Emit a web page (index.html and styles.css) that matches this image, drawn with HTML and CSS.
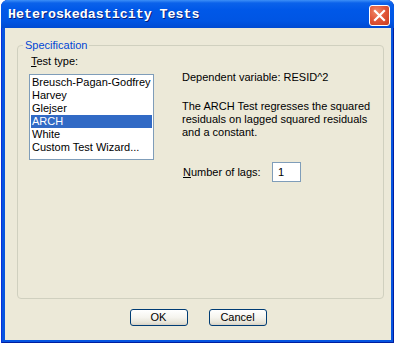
FILE: index.html
```html
<!DOCTYPE html>
<html lang="en">
<head>
    <meta charset="UTF-8">
    <title>Heteroskedasticity Tests</title>
    <link rel="stylesheet" href="styles.css">
</head>
<body>
    <div class="window">
        <div class="titlebar">
            <span class="title">Heteroskedasticity Tests</span>
            <div class="close-btn">
                <svg width="13" height="13" viewBox="0 0 13 13">
                    <path d="M2 2 L11 11 M11 2 L2 11" stroke="#fff" stroke-width="2.2" stroke-linecap="square"/>
                </svg>
            </div>
        </div>

        <div class="client">
            <fieldset class="group">
                <legend>Specification</legend>
                <div class="group-body">
                    <div class="left-col">
                        <div class="label"><u>T</u>est type:</div>
                        <div class="listbox">
                            <div class="item">Breusch-Pagan-Godfrey</div>
                            <div class="item">Harvey</div>
                            <div class="item">Glejser</div>
                            <div class="item selected">ARCH</div>
                            <div class="item">White</div>
                            <div class="item">Custom Test Wizard...</div>
                        </div>
                    </div>
                    <div class="right-col">
                        <div class="dep-var">Dependent variable: RESID^2</div>
                        <p class="desc">The ARCH Test regresses the squared residuals on lagged squared residuals and a constant.</p>
                        <div class="lags-row">
                            <span class="lags-label"><u>N</u>umber of lags:</span>
                            <div class="textbox">1</div>
                        </div>
                    </div>
                </div>
            </fieldset>

            <div class="buttons">
                <div class="btn">OK</div>
                <div class="btn">Cancel</div>
            </div>
        </div>
    </div>
</body>
</html>
```

FILE: styles.css
```css
body {
    margin: 0;
    background: #ffffff;
    font-family: "Liberation Sans", Arial, sans-serif;
    font-size: 11px;
    color: #000;
}

.window {
    margin-left: 1px;
    width: 393px;
    height: 343px;
    background: #0654e0;
    border-radius: 7px 7px 0 0;
    display: flex;
    flex-direction: column;
    box-shadow: inset 1px 0 0 #0831d9, inset -1px 0 0 #001ea0, inset 0 -1px 0 #001ea0;
}

.titlebar {
    height: 28px;
    display: flex;
    align-items: center;
    justify-content: space-between;
    padding: 0 4px 0 7px;
    border-radius: 7px 7px 0 0;
    background: linear-gradient(#3d8ff7 0, #0b62ea 3px, #0058e8 35%, #0055e3 75%, #004ad2 100%);
}

.title {
    font-family: "Liberation Mono", monospace;
    font-weight: bold;
    font-size: 13.3px;
    color: #fff;
    text-shadow: 1px 1px 0 #0a1f78;
    margin-top: 1px;
}

.close-btn {
    width: 19px;
    height: 19px;
    border: 1px solid #fff;
    border-radius: 3px;
    background: radial-gradient(circle at 35% 30%, #f08a6a 0, #e2583a 45%, #c93c1c 100%);
    display: flex;
    align-items: center;
    justify-content: center;
    margin-top: 2px;
}

.client {
    flex: 1;
    margin: 0 3px 3px 4px;
    background: #ece9d8;
    padding: 12px 0 0 12px;
}

.group {
    width: 367px;
    height: 259px;
    box-sizing: border-box;
    margin: 0;
    padding: 4px 0 0 11px;
    border: 1px solid #d0d0bf;
    border-radius: 4px;
}

.group legend {
    color: #0046d5;
    line-height: 11px;
    padding: 0 2px;
    margin-left: -6px;
}

.group-body {
    display: flex;
    gap: 28px;
}

.left-col {
    width: 125px;
}

.label {
    line-height: 13px;
    margin: 0 0 6px 2px;
}

.listbox {
    height: 86px;
    box-sizing: border-box;
    border: 1px solid #7f9db9;
    background: #fff;
    padding: 1px;
}

.item {
    height: 13px;
    line-height: 13px;
    padding-left: 1px;
    white-space: nowrap;
}

.item.selected {
    background: #316ac5;
    color: #fff;
}

.right-col {
    padding-top: 16px;
}

.dep-var {
    line-height: 13px;
}

.desc {
    margin: 16px 0 0;
    line-height: 13px;
    width: 190px;
}

.lags-row {
    display: flex;
    align-items: center;
    margin-top: 23px;
}

.lags-label {
    width: 89px;
    padding-left: 1px;
}

.textbox {
    width: 29px;
    height: 20px;
    box-sizing: border-box;
    border: 1px solid #7f9db9;
    background: #fff;
    padding-left: 5px;
    line-height: 18px;
}

.buttons {
    display: flex;
    justify-content: center;
    gap: 21px;
    margin: 10px 0 0 -12px;
}

.btn {
    width: 58px;
    height: 17px;
    box-sizing: border-box;
    border: 1px solid #003c74;
    border-radius: 3px;
    background: linear-gradient(#ffffff 0, #f5f4ee 50%, #e6e3d6 85%, #d6d0c5 100%);
    text-align: center;
    line-height: 15px;
}
```
